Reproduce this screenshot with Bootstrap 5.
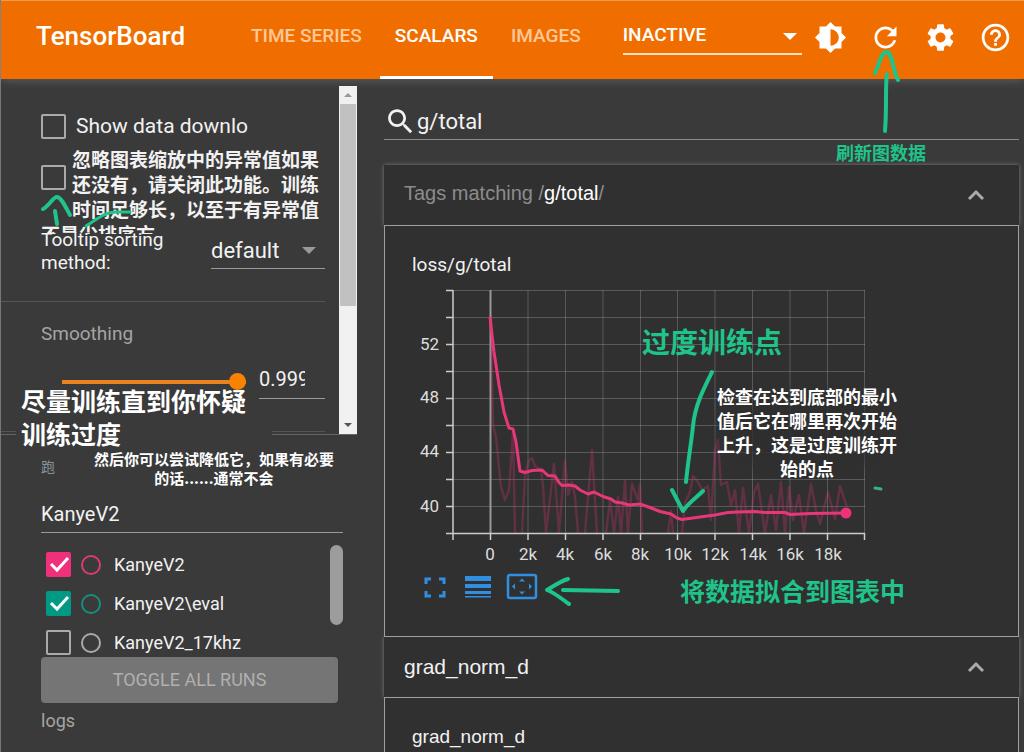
<!DOCTYPE html>
<html lang="zh-CN">
<head>
<meta charset="utf-8">
<meta name="viewport" content="width=device-width, initial-scale=1">
<title>TensorBoard</title>
<link href="https://cdn.jsdelivr.net/npm/bootstrap@5.3.0/dist/css/bootstrap.min.css" rel="stylesheet">
<style>
:root{--tb-orange:#f06e00;--tb-bg:#3a3a3a;--tb-panel:#303030;--tb-note:#1fc48a}
body{font-family:Roboto,"Noto Sans CJK SC",sans-serif;background:var(--tb-bg);color:#f2f2f2;line-height:24px}
svg{display:block}
.app-shell{border-left:1px solid #777}
.top-bar{height:79px;background:var(--tb-orange);border-top:1px solid #f09a50;padding:0 12px 0 35px;box-shadow:0 1px 10px rgba(255,255,255,.2);z-index:2}
.brand-name{font-size:26px;font-weight:500;width:200px;color:#fff;text-decoration:none;line-height:70px}
.tab-link{font-size:19px;font-weight:500;line-height:70px;padding:0 15px;color:#ffc899;text-decoration:none;border-bottom:3px solid transparent;height:78px;margin-right:3px}
.tab-link.active{color:#fff;border-color:#fff}
.reload-wrap{width:179px;margin:0 11px 0 24px}
.flat-select{appearance:none;background:none;border:0;border-bottom:1px solid #999;border-radius:0;color:#f2f2f2;width:100%;padding:0;outline:0;display:block}
.flat-select option{color:#222}
.reload-wrap .flat-select{font-size:19px;font-weight:500;color:#fff;height:38px;border-bottom:2px solid #ffe0c4}
.caret-tri{position:absolute;right:5px;top:16px;border:7px solid transparent;border-top-color:#fff;border-bottom:0;pointer-events:none}
.icon-btn{background:none;border:0;padding:0;color:#fff}
.cn-note{position:absolute;font-weight:700;font-family:"Noto Sans CJK SC",sans-serif;margin:0;color:#fff}
.green{color:var(--tb-note)}
.ink{position:absolute;fill:none;stroke:var(--tb-note);stroke-linecap:round;stroke-linejoin:round;pointer-events:none;z-index:3}
.side{flex:0 0 356px}
.settings-pane{margin-top:7px;height:349px;border-bottom:1px solid #666}
.settings-body{padding-top:28px}
.box{appearance:none;flex:none;width:25px;height:25px;border:2px solid #aaa;border-radius:2px;margin:0;background:transparent center/25px no-repeat}
.box:checked{background-image:url("data:image/svg+xml,%3Csvg xmlns='http://www.w3.org/2000/svg' viewBox='0 0 25 25'%3E%3Cpath d='M5 12l6 6L22 6' fill='none' stroke='white' stroke-width='3'/%3E%3C/svg%3E")}
.box.pink:checked{background-color:#f0307a;border-color:#f0307a}
.box.teal:checked{background-color:#009984;border-color:#009984}
.cn-label{font-size:19px;font-weight:700;line-height:25px;color:#f2f2f2}
.fs18{font-size:18px}.fs19{font-size:19px}.fs20{font-size:20px}.fs21{font-size:21px}.fs22{font-size:22px}
.muted{color:#a5a5a5}
.rule-line{border-bottom:1px solid #555}
.vbar{width:18px;background:#f1f1f1;padding:0 1px}
.vbar-thumb{background:#c1c1c1;height:202px}
.smooth{appearance:none;width:184px;height:18px;background:linear-gradient(#e88420,#e88420) center/100% 4px no-repeat}
.smooth::-webkit-slider-thumb{appearance:none;width:17px;height:17px;border-radius:50%;background:#fb8200}
.line-input{background:none;border:0;border-bottom:1px solid #999;color:#f2f2f2;padding:0;outline:0;border-radius:0;min-width:0}
.filter-input{width:302px;height:36px;margin:18px 0 12px;padding-bottom:2px}
.ring{width:20px;height:20px;border:2px solid #aaa;border-radius:50%;flex:none;margin:0 13px 0 10px}
.run-list{height:112px;overflow:hidden}
.run-row{height:39px;padding-left:5px}
.run-thumb{width:13px;height:80px;border-radius:7px;background:#9c9c9c}
.toggle-btn{background:#757575;color:#b0b0b0;width:297px;height:46px;border:0;border-radius:4px;font-size:18px}
.main-col{min-width:0;padding:0 5px 0 27px}
.search-line{border-bottom:1px solid #888;height:36px}
.group-head{background:var(--tb-panel);height:60px;padding:0 34px 0 20px;box-shadow:0 0 4px rgba(255,255,255,.35)}
.arial{font-family:"Liberation Sans",sans-serif}
.group-body{background:var(--tb-panel);border:1px solid #a0a0a0;padding:27px 27px 0;position:relative}
.axis-text text{fill:#ddd;font-size:17px;font-family:Roboto,sans-serif}
</style>
</head>
<body>
<div class="app-shell d-flex flex-column min-vh-100">
<header class="top-bar d-flex align-items-start position-relative">
  <a class="brand-name" href="#">TensorBoard</a>
  <nav class="d-flex">
    <a class="tab-link" href="#">TIME SERIES</a>
    <a class="tab-link active" href="#" aria-current="page">SCALARS</a>
    <a class="tab-link" href="#">IMAGES</a>
  </nav>
  <div class="reload-wrap position-relative mt-3">
    <select class="flat-select" aria-label="Plugins"><option>INACTIVE</option></select>
    <span class="caret-tri"></span>
  </div>
  <div class="d-flex ms-auto pt-3 mt-1" style="gap:22px">
    <button class="icon-btn" aria-label="Theme"><svg width="33" height="33" viewBox="0 0 24 24" fill="currentColor"><path d="M20 15.31 23.31 12 20 8.69V4h-4.69L12 .69 8.69 4H4v4.69L.69 12 4 15.31V20h4.69L12 23.31 15.31 20H20v-4.69zM12 18V6c3.31 0 6 2.69 6 6s-2.69 6-6 6z"/></svg></button>
    <button class="icon-btn position-relative" aria-label="Reload"><svg width="33" height="33" viewBox="0 0 24 24" fill="currentColor"><path d="M17.65 6.35C16.2 4.9 14.21 4 12 4c-4.42 0-7.99 3.58-7.99 8s3.57 8 7.99 8c3.73 0 6.84-2.55 7.73-6h-2.08c-.82 2.33-3.04 4-5.65 4-3.31 0-6-2.69-6-6s2.69-6 6-6c1.66 0 3.14.69 4.22 1.78L13 11h7V4l-2.35 2.35z"/></svg>
      <svg class="ink" style="left:0;top:24px" width="40" height="94" viewBox="869 45 40 94" stroke-width="4"><path d="M875 73C879 66 881 51 887 52C893 54 892 69 898 80M887 74C885 88 887 106 885 131"/></svg></button>
    <button class="icon-btn" aria-label="Settings"><svg width="33" height="33" viewBox="0 0 24 24" fill="currentColor"><path d="M19.14 12.94c.04-.3.06-.61.06-.94 0-.32-.02-.64-.07-.94l2.03-1.58c.18-.14.23-.41.12-.61l-1.92-3.32c-.12-.22-.37-.29-.59-.22l-2.39.96c-.5-.38-1.03-.7-1.62-.94l-.36-2.54c-.04-.24-.24-.41-.48-.41h-3.84c-.24 0-.43.17-.47.41l-.36 2.54c-.59.24-1.13.57-1.62.94l-2.39-.96c-.22-.08-.47 0-.59.22L2.74 8.87c-.12.21-.08.47.12.61l2.03 1.58c-.05.3-.09.63-.09.94s.02.64.07.94l-2.03 1.58c-.18.14-.23.41-.12.61l1.92 3.32c.12.22.37.29.59.22l2.39-.96c.5.38 1.03.7 1.62.94l.36 2.54c.05.24.24.41.48.41h3.84c.24 0 .44-.17.47-.41l.36-2.54c.59-.24 1.13-.56 1.62-.94l2.39.96c.22.08.47 0 .59-.22l1.92-3.32c.12-.22.07-.47-.12-.61l-2.01-1.58zM12 15.6c-1.98 0-3.6-1.62-3.6-3.6s1.62-3.6 3.6-3.6 3.6 1.62 3.6 3.6-1.62 3.6-3.6 3.6z"/></svg></button>
    <button class="icon-btn" aria-label="Help"><svg width="33" height="33" viewBox="0 0 24 24" fill="currentColor"><path d="M11 18h2v-2h-2v2zm1-16C6.48 2 2 6.48 2 12s4.48 10 10 10 10-4.48 10-10S17.52 2 12 2zm0 18c-4.41 0-8-3.59-8-8s3.59-8 8-8 8 3.59 8 8-3.59 8-8 8zm0-14c-2.21 0-4 1.79-4 4h2c0-1.1.9-2 2-2s2 .9 2 2c0 2-3 1.75-3 5h2c0-2.25 3-2.5 3-5 0-2.21-1.79-4-4-4z"/></svg></button>
  </div>
</header>

<div class="d-flex flex-grow-1">
<aside class="side">
  <section class="settings-pane d-flex position-relative">
    <div class="settings-body flex-grow-1">
      <div class="d-flex" style="padding-left:40px;gap:10px"><input class="box" type="checkbox" id="dl"><label for="dl" class="fs21">Show data downlo</label></div>
      <div class="d-flex position-relative overflow-hidden" style="padding:9px 0 0 40px;gap:6px;height:95px">
        <input class="box" type="checkbox" id="outl" style="margin-top:17px">
        <label for="outl" class="cn-label">忽略图表缩放中的异常值如果<br>还没有，请关闭此功能。训练<br>时间足够长，以至于有异常值<br><span style="margin-left:-31px">不是尖排序方</span></label>
      </div>
      <div class="d-flex align-items-start" style="padding:0 14px 0 40px">
        <label for="sorting" class="fs19" style="width:170px;line-height:23px;margin-top:-6px">Tooltip sorting<br>method:</label>
        <div class="position-relative flex-grow-1"><select id="sorting" class="flat-select fs22" style="height:35px"><option>default</option></select><span class="caret-tri" style="right:9px;top:13px;border-top-color:#999"></span></div>
      </div>
      <div class="rule-line" style="height:28px;margin-right:14px"></div>
      <label for="smoothing" class="fs19 muted d-block" style="padding:20px 0 0 40px">Smoothing</label>
      <div class="d-flex align-items-center" style="padding:18px 14px 0 61px;gap:13px">
        <input id="smoothing" class="smooth" type="range" min="0" max="1" step="0.001" value="1">
        <div class="flex-grow-1" style="border-bottom:1px solid #999;padding-bottom:5px"><input class="line-input fs20 border-0 d-block" style="width:46px;height:29px" value="0.999" aria-label="Smoothing value"></div>
      </div>
      <div class="rule-line" style="height:33px;margin-right:14px"></div>
    </div>
    <div class="vbar d-flex flex-column" aria-hidden="true">
      <svg width="16" height="18" viewBox="0 0 16 18"><path d="M4 11h8L8 7z" fill="#999"/></svg>
      <div class="vbar-thumb"></div>
      <svg class="mt-auto" width="16" height="18" viewBox="0 0 16 18"><path d="M4 7h8l-4 4z" fill="#555"/></svg>
    </div>
    <svg class="ink" style="left:39px;top:106px" width="110" height="44" viewBox="40 192 110 44" stroke-width="4"><path d="M43 209C49 206 53 197 57 197C61 197 65 206 70 215M55 211L57 224"/><path d="M86 226C100 217 106 212 116 212H130" stroke-width="3"/></svg>
    <p class="cn-note" style="left:15px;top:298px;width:256px;padding-left:5px;font-size:25px;line-height:33px;background:linear-gradient(transparent 30px,var(--tb-bg) 30px)">尽量训练直到你怀疑<br>训练过度</p>
  </section>
  <section class="position-relative" style="padding:20px 0 0 40px">
    <div style="color:#83949a;font-size:14px">跑</div>
    <p class="cn-note text-center" style="left:88px;top:14px;width:250px;font-size:15px;line-height:19px">然后你可以尝试降低它，如果有必要<br>的话......通常不会</p>
    <input class="line-input filter-input fs20 d-block" value="KanyeV2" aria-label="Run filter">
    <div class="run-list d-flex" style="width:302px">
      <div class="flex-grow-1 fs18">
        <div class="run-row d-flex align-items-center"><input id="r1" type="checkbox" class="box pink" checked><span class="ring" style="border-color:#d83c75"></span><label for="r1">KanyeV2</label></div>
        <div class="run-row d-flex align-items-center"><input id="r2" type="checkbox" class="box teal" checked><span class="ring" style="border-color:#158f7f"></span><label for="r2">KanyeV2\eval</label></div>
        <div class="run-row d-flex align-items-center"><input id="r3" type="checkbox" class="box"><span class="ring"></span><label for="r3">KanyeV2_17khz</label></div>
      </div>
      <div class="run-thumb"></div>
    </div>
    <button class="toggle-btn d-block">TOGGLE ALL RUNS</button>
    <div class="fs18 muted" style="padding-top:6px">logs</div>
  </section>
</aside>

<main class="main-col flex-grow-1 d-flex flex-column position-relative">
  <div class="search-line d-flex align-items-center" style="margin:25px 0">
    <svg width="33" height="33" viewBox="0 0 24 24" fill="#f2f2f2"><path d="M15.5 14h-.79l-.28-.27C15.41 12.59 16 11.11 16 9.5 16 5.91 13.09 3 9.5 3S3 5.91 3 9.5 5.91 16 9.5 16c1.61 0 3.09-.59 4.23-1.57l.27.28v.79l5 4.99L20.49 19l-4.99-5zm-6 0C7.01 14 5 11.99 5 9.5S7.01 5 9.5 5 14 7.01 14 9.5 11.99 14 9.5 14z"/></svg>
    <input class="line-input border-0 fs22 flex-grow-1" value="g/total" aria-label="Filter tags">
  </div>
  <p class="cn-note green" style="right:98px;top:61px;font-size:18px;line-height:24px">刷新图数据</p>

  <div class="group-head d-flex align-items-center justify-content-between">
    <span class="arial fs20 pb-1" style="color:#8c8c8c">Tags matching /<span class="text-white">g/total</span>/</span>
    <svg width="18" height="12" viewBox="0 0 18 12" fill="none" stroke="#aaa" stroke-width="3"><path d="M2 10l7-7 7 7"/></svg>
  </div>
  <div class="group-body">
    <div class="fs19">loss/g/total</div>
    <svg class="axis-text mw-100" width="480" height="290" viewBox="412 277 480 290" role="img" aria-label="loss/g/total">
      <g stroke="#fff" stroke-opacity=".2"><path d="M528 290V533M565.500 290V533M603 290V533M640.500 290V533M677.500 290V533M715 290V533M752.500 290V533M790 290V533M827.500 290V533M864.500 290V533M453 290.500H865M453 317.500H865M453 344.500H865M453 371.500H865M453 398.500H865M453 425.500H865M453 452.500H865M453 479.500H865M453 506.500H865" fill="none"/></g>
      <path d="M490.500 290V533" stroke="#999" stroke-width="2"/>
      <g fill="none" stroke="#f0307a" stroke-opacity=".25" stroke-width="2.500" stroke-linejoin="round"><path d="M491 317L493 425L496 437L501 487L505 500L509 490L513 432L515 533M522 533L525 475L529 460L532 458L535 466L541 470L543 485L546 533L554 464L559 533L565 460L568 495L572 482L575 497L578 533M585 533L592 450L597 533M606 533L610 500L614 533L618 497L621 533L625 481L628 533L632 484L638 500L640 484L642 533M668 533L671 511L673 533M682 533L685 503L690 492L693 476L698 482L702 490L708 486L711 520L715 450L718 440L721 485L727 482L731 506L735 490L739 533L743 488L749 533L754 492L758 484L765 533L771 495L776 530L781 482L785 533L789 487L793 520L799 495L804 533L811 484L816 510L820 524L828 492L835 519L840 486L847 507"/></g>
      <path d="M490 317L494 352L499 385L504 412L509 428L513 429L516 442L520 471L525 472.500L532 470.500L542 470L548 475.500L555 476L559 482.500L562 485.500L569 485L575 486L580 490L588 494L594 492L603 496.500L611 499L615 502L622 503L629 505L640 504L650 507.500L660 511.500L671 514L677 518L682 519.500L700 517L715 515L728 512.500L738 512L755 511.500L765 512.500L785 512.500L790 514.500L810 513.500L846 513" fill="none" stroke="#e63878" stroke-width="3" stroke-linejoin="round"/>
      <circle cx="846" cy="513" r="5.500" fill="#f0307a"/>
      <path d="M453 290V540M446 533.500H865M446 290.500H453M446 317.500H453M446 344.500H453M446 371.500H453M446 398.500H453M446 425.500H453M446 452.500H453M446 479.500H453M446 506.500H453M490.500 533V540M528 533V540M565.500 533V540M603 533V540M640.500 533V540M677.500 533V540M715 533V540M752.500 533V540M790 533V540M827.500 533V540M864.500 533V540" fill="none" stroke="#ccc" stroke-width="1.500"/>
      <g text-anchor="end"><text x="439" y="350">52</text><text x="439" y="403">48</text><text x="439" y="457">44</text><text x="439" y="512">40</text></g>
      <g text-anchor="middle"><text x="490" y="560">0</text><text x="528" y="560">2k</text><text x="565" y="560">4k</text><text x="603" y="560">6k</text><text x="640" y="560">8k</text><text x="678" y="560">10k</text><text x="715" y="560">12k</text><text x="753" y="560">14k</text><text x="790" y="560">16k</text><text x="828" y="560">18k</text></g>
    </svg>
    <div class="d-flex align-items-center" style="padding:4px 0 33px 11px;gap:15px">
      <button class="icon-btn" aria-label="Fullscreen"><svg width="24" height="32" viewBox="0 0 24 32" fill="none" stroke="#318fe2" stroke-width="3"><path d="M3 13V8h5M16 8h5v5M21 20v5h-5M8 25H3v-5"/></svg></button>
      <button class="icon-btn" aria-label="Toggle y-axis scale" style="margin-left:3px"><svg width="26" height="32" viewBox="0 0 26 32" fill="#318fe2"><path d="M0 5h26v5H0zM0 13h26v4H0zM0 20h26v3H0zM0 25h26v1.500H0z"/></svg></button>
      <button class="icon-btn" aria-label="Fit domain to data"><svg width="32" height="32" viewBox="0 0 32 32"><rect x="2" y="4" width="28" height="23" rx="2" fill="none" stroke="#318fe2" stroke-width="2.500"/><path d="M13 10.500h6l-3-3zM13 20.500h6l-3 3zM9 12.500v6l-3-3zM23 12.500v6l3-3z" fill="#318fe2"/></svg></button>
    </div>
    <svg class="ink" style="left:283px;top:139px" width="220" height="250" viewBox="668 365 220 250" stroke-width="4"><path d="M712 372C704 388 695 405 693 426C691 445 688 461 686 482M672 490L683 511C689 502 697 497 703 491"/><path d="M875 488l6 1" stroke-width="3" stroke="#39ad91"/></svg>
    <svg class="ink" style="left:157px;top:344px" width="84" height="44" viewBox="542 570 84 44" stroke-width="4"><path d="M568 579C561 581 555 585 547 590C555 593 562 599 569 604M563 590L618 591"/></svg>
    <p class="cn-note green" style="left:257px;top:97px;font-size:28px;line-height:36px">过度训练点</p>
    <p class="cn-note text-center" style="left:326px;top:158px;width:192px;font-size:18px;line-height:24px;background:radial-gradient(#2e2e2ed0 45%,transparent 75%)">检查在达到底部的最小<br>值后它在哪里再次开始<br>上升，这是过度训练开<br>始的点</p>
    <p class="cn-note green" style="left:295px;top:348px;font-size:25px;line-height:32px">将数据拟合到图表中</p>
  </div>
  <div class="group-head d-flex align-items-center justify-content-between">
    <span class="arial fs21">grad_norm_d</span>
    <svg width="18" height="12" viewBox="0 0 18 12" fill="none" stroke="#aaa" stroke-width="3"><path d="M2 10l7-7 7 7"/></svg>
  </div>
  <div class="group-body flex-grow-1 border-bottom-0">
    <div class="arial fs19">grad_norm_d</div>
  </div>
</main>
</div>
</div>
<script src="https://cdn.jsdelivr.net/npm/bootstrap@5.3.0/dist/js/bootstrap.bundle.min.js"></script>
</body>
</html>
